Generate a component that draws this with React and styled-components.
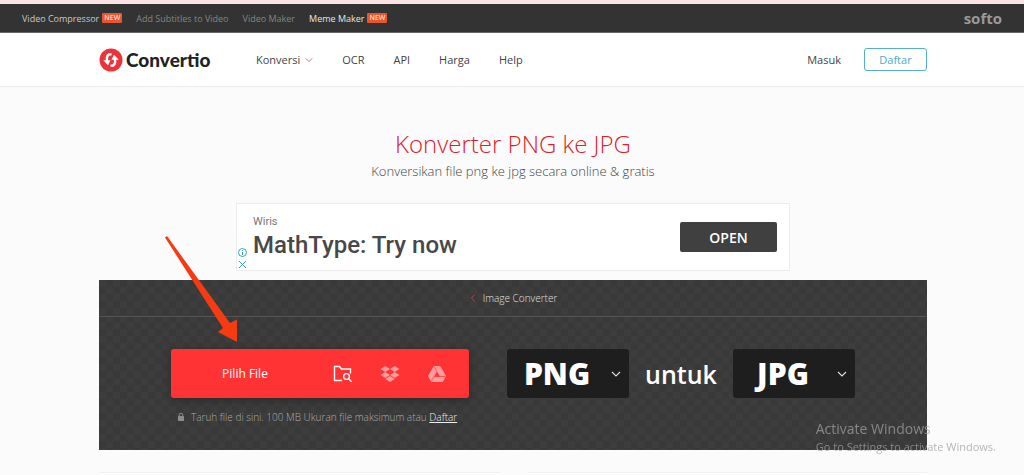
import React from 'react'
import styled, { createGlobalStyle } from 'styled-components'

const GlobalStyle = createGlobalStyle`
    * {
        box-sizing: border-box;
    }

    body {
        margin: 0;
        background: #fbfbfb;
        color: #444;
        font-family: "Open Sans", "Noto Sans", sans-serif;
        font-size: 11px;
    }

    a {
        color: inherit;
        text-decoration: none;
    }

    button,
    select {
        font-family: inherit;
        border: 0;
        padding: 0;
        cursor: pointer;
    }
`

/* icons */
const Chevron = ({ size = 10, color = '#e0e0e0', left }) => (
    <svg width={size} height={size} viewBox="0 0 10 10" fill="none" stroke={color} strokeWidth="1.1" aria-hidden="true">
        <path d={left ? 'M7 1L3 5l4 4' : 'M1 3l4 4 4-4'} />
    </svg>
)

const LogoMark = () => (
    <svg width="24" height="24" viewBox="0 0 24 24" aria-hidden="true">
        <circle cx="12" cy="12" r="11.5" fill="#e8343a" />
        <g fill="none" stroke="#fff" strokeWidth="2.4">
            <path d="M12.500 6.400H10C8 7.400 7.600 9 7.900 11.500v2" />
            <path d="M11.500 17.600H14c2-1 2.400-2.600 2.100-5.100v-2" />
        </g>
        <path fill="#fff" d="M4.300 12.200h7.200l-2.500 5zM19.700 11.800h-7.200l2.500-5z" />
    </svg>
)

const FolderSearch = () => (
    <svg width="20" height="18" viewBox="0 0 20 18" fill="none" stroke="#fff" strokeWidth="1.4" aria-hidden="true">
        <path d="M9 15.500H1.500V1.500h5l2 2.500h9v4.500" />
        <circle cx="13.500" cy="11.500" r="2.900" />
        <path d="M15.600 13.700l3 3" />
    </svg>
)

const Dropbox = () => (
    <svg width="20" height="18" viewBox="0 0 20 18" fill="#ff9d9d" aria-hidden="true">
        <path d="M5.300 1L10 4 5.300 7 .6 4zM14.700 1l4.700 3-4.700 3L10 4zM5.300 7l4.700 3-4.700 3L.6 10zM14.700 7l4.700 3-4.700 3L10 10zM5.300 14L10 11l4.700 3L10 17z" />
    </svg>
)

const Drive = () => (
    <svg width="18" height="16" viewBox="0 0 18 16" aria-hidden="true">
        <path
            d="M6 .5h6L17.500 10l-3 5.500h-11L.5 10z"
            fill="#ff9d9d"
            stroke="#ff9d9d"
            strokeLinejoin="round"
        />
        <path d="M9 5.600l2.900 4.900H6.100z" fill="#ff3333" />
        <path d="M6.100 10.500h11M9 5.600L6.100.8M6.100 10.500l-3 5" stroke="#ff3333" strokeWidth=".7" />
    </svg>
)

const Lock = () => (
    <svg width="8" height="10" viewBox="0 0 8 10" aria-hidden="true">
        <rect x="1" y="4" width="6" height="5" rx=".5" fill="#8b8b8b" />
        <path d="M2.200 4.500V3a1.800 1.800 0 0 1 3.600 0v1.500" fill="none" stroke="#8b8b8b" />
    </svg>
)

const promoLinks = [
    { label: 'Video Compressor', tone: '#c9c9c9', isNew: true },
    { label: 'Add Subtitles to Video', tone: '#858585' },
    { label: 'Video Maker', tone: '#858585' },
    { label: 'Meme Maker', tone: '#e6e6e6', isNew: true }
]

const FormatPicker = ({ label, value, options }) => (
    <PickerBox>
        <PickerSelect aria-label={label} defaultValue={value}>
            {options.map(option => (
                <option key={option}>{option}</option>
            ))}
        </PickerSelect>
        <PickerArrow>
            <Chevron />
        </PickerArrow>
    </PickerBox>
)

const App = () => (
    <>
        <GlobalStyle />
        <TopBar>
            <PromoNav>
                {promoLinks.map(link => (
                    <PromoLink key={link.label} href="#" $tone={link.tone}>
                        {link.label}
                        {link.isNew && <NewTag>NEW</NewTag>}
                    </PromoLink>
                ))}
            </PromoNav>
            <Softo href="#">softo</Softo>
        </TopBar>

        <Header>
            <HeaderInner>
                <Brand href="#">
                    <LogoMark />
                    Convertio
                </Brand>
                <Menu>
                    <a href="#">
                        Konversi <Chevron size={8} color="#c96060" />
                    </a>
                    <a href="#">OCR</a>
                    <a href="#">API</a>
                    <a href="#">Harga</a>
                    <a href="#">Help</a>
                </Menu>
                <Account>
                    <a href="#">Masuk</a>
                    <SignUp>Daftar</SignUp>
                </Account>
            </HeaderInner>
        </Header>

        <Main>
            <Title>Konverter PNG ke JPG</Title>
            <Subtitle>Konversikan file png ke jpg secara online &amp; gratis</Subtitle>

            <Ad>
                <AdMarks>
                    <svg width="9" height="9" viewBox="0 0 9 9" fill="none" stroke="#2fa5b8" aria-hidden="true">
                        <circle cx="4.500" cy="4.500" r="4" />
                        <path d="M4.500 2v1M4.500 4v3" />
                    </svg>
                    <svg width="9" height="9" viewBox="0 0 9 9" stroke="#2fa5b8" aria-hidden="true">
                        <path d="M1 1l7 7M8 1l-7 7" />
                    </svg>
                </AdMarks>
                <AdText>
                    <AdSponsor>Wiris</AdSponsor>
                    <AdHeadline>MathType: Try now</AdHeadline>
                </AdText>
                <AdButton>OPEN</AdButton>
            </Ad>

            <Panel>
                <Crumb>
                    <Chevron left size={8} color="#e04545" />
                    <a href="#">Image Converter</a>
                </Crumb>
                <PanelBody>
                    <UploadColumn>
                        <UploadBar>
                            <PickFile>Pilih File</PickFile>
                            <SourceButton aria-label="Folder"><FolderSearch /></SourceButton>
                            <SourceButton aria-label="Dropbox"><Dropbox /></SourceButton>
                            <SourceButton aria-label="Google Drive"><Drive /></SourceButton>
                        </UploadBar>
                        <Note>
                            <Lock />
                            <span>
                                Taruh file di sini. 100 MB Ukuran file maksimum atau <a href="#">Daftar</a>
                            </span>
                        </Note>
                    </UploadColumn>
                    <Formats>
                        <FormatPicker label="Format asal" value="PNG" options={['PNG', 'JPG', 'GIF']} />
                        <To>untuk</To>
                        <FormatPicker label="Format tujuan" value="JPG" options={['JPG', 'PNG', 'GIF']} />
                    </Formats>
                </PanelBody>
            </Panel>

            <Cards>
                <Card />
                <Card />
            </Cards>

            <Pointer width="76" height="110" viewBox="0 0 76 110" aria-hidden="true">
                <path d="M1 2.500L3 1l63 87 7-3.500V107L54 97l5-4z" fill="#f63a12" />
            </Pointer>
        </Main>

        <Watermark>
            <WatermarkTitle>Activate Windows</WatermarkTitle>
            <div>Go to Settings to activate Windows.</div>
        </Watermark>
    </>
)

export default App

const TopBar = styled.div`
    display: flex;
    align-items: center;
    justify-content: space-between;
    height: 33px;
    padding: 0 22px;
    background: #333;
    border-top: 4px solid #fbe3e3;
    border-bottom: 1px solid #666;
`

const PromoNav = styled.nav`
    display: flex;
    gap: 14px;
    font-size: 9px;
`

const PromoLink = styled.a`
    display: flex;
    align-items: center;
    gap: 3px;
    color: ${props => props.$tone};
`

const NewTag = styled.span`
    padding: 0 2px;
    border-radius: 1px;
    background: #e8552f;
    color: #fbd8cc;
    font-size: 7px;
    font-weight: 600;
    line-height: 10px;
`

const Softo = styled.a`
    color: #999;
    font-size: 15px;
    font-weight: 700;
    line-height: 20px;
`

const Header = styled.header`
    padding-left: 2px;
    background: #fff;
    border-bottom: 1px solid #ececec;
`

const HeaderInner = styled.div`
    display: flex;
    align-items: center;
    max-width: 828px;
    height: 53px;
    margin: 0 auto;
`

const Brand = styled.a`
    display: flex;
    align-items: center;
    gap: 3px;
    width: 157px;
    color: #222;
    font-family: Lato, sans-serif;
    font-size: 19px;
    font-weight: 900;
`

const Menu = styled.nav`
    display: flex;
    flex: 1;
    gap: 29px;

    svg {
        margin-left: 2px;
    }
`

const Account = styled.div`
    display: flex;
    align-items: center;
    gap: 23px;
`

const SignUp = styled.button`
    width: 63px;
    height: 23px;
    border: 1px solid #55b0cf;
    border-radius: 3px;
    background: #fff;
    color: #4fa8cc;
    font-size: 11px;
`

const Main = styled.main`
    position: relative;
    display: flex;
    flex-direction: column;
    align-items: center;
    padding: 40px 0 0 2px;
`

const Title = styled.h1`
    margin: 0;
    color: #dc2228;
    font-size: 24px;
    font-weight: 300;
    line-height: 34px;
`

const Subtitle = styled.p`
    margin: 0 0 22px;
    color: #444;
    font-size: 13px;
    font-weight: 300;
    line-height: 20px;
`

const Ad = styled.section`
    display: flex;
    align-items: center;
    width: 100%;
    max-width: 554px;
    height: 68px;
    padding-right: 12px;
    border: 1px solid #ececec;
    background: #fff;
`

const AdMarks = styled.div`
    display: flex;
    flex-direction: column;
    align-self: flex-end;
    gap: 3px;
    width: 16px;
    padding: 0 0 1px 1px;
`

const AdText = styled.div`
    flex: 1;
    color: #484848;
    font-family: Roboto, sans-serif;
`

const AdSponsor = styled.div`
    color: #777;
    font-size: 11px;
    line-height: 16px;
`

const AdHeadline = styled.div`
    font-size: 24px;
    font-weight: 500;
    line-height: 30px;
`

const AdButton = styled.button`
    width: 97px;
    height: 30px;
    border-radius: 2px;
    background: #404040;
    color: #fff;
    font-size: 14px;
    font-weight: 600;
`

const Panel = styled.section`
    width: 100%;
    max-width: 828px;
    margin-top: 9px;
    background: repeating-conic-gradient(#393939 0 25%, #3d3d3d 0 50%) 0 0 / 14px 14px;
`

const Crumb = styled.div`
    display: flex;
    align-items: center;
    justify-content: center;
    gap: 6px;
    height: 37px;
    border-bottom: 1px solid #555;
    color: #e0e0e0;
    font-size: 10px;
    font-weight: 300;
`

const PanelBody = styled.div`
    display: flex;
    justify-content: space-between;
    padding: 32px 72px 25px;
`

const UploadColumn = styled.div`
    flex: 0 1 298px;
`

const UploadBar = styled.div`
    display: flex;
    align-items: center;
    height: 49px;
    padding-right: 9px;
    border-radius: 3px;
    background: #f33;
    box-shadow: 0 2px 8px #2a2a2a;
`

const PickFile = styled.button`
    flex: 1;
    height: 100%;
    background: none;
    color: #fff;
    font-size: 12px;
`

const SourceButton = styled.button`
    display: flex;
    align-items: center;
    justify-content: center;
    width: 47px;
    height: 100%;
    background: none;
`

const Note = styled.div`
    display: flex;
    align-items: center;
    gap: 6px;
    padding: 11px 0 0 6px;
    color: #aaa;
    font-size: 10px;
    font-weight: 300;
    line-height: 16px;
    white-space: nowrap;

    a {
        color: #eee;
        text-decoration: underline;
    }
`

const Formats = styled.div`
    display: flex;
    align-items: center;
    justify-content: space-between;
    width: 348px;
    height: 49px;
`

const PickerBox = styled.div`
    position: relative;
    width: 122px;
    height: 49px;
`

const PickerSelect = styled.select`
    width: 100%;
    height: 100%;
    padding-right: 22px;
    appearance: none;
    border-radius: 3px;
    background: #1e1e1e;
    color: #fff;
    font-size: 30px;
    font-weight: 800;
    text-align-last: center;
`

const PickerArrow = styled.span`
    position: absolute;
    top: 0;
    right: 8px;
    display: flex;
    align-items: center;
    height: 100%;
    pointer-events: none;
`

const To = styled.span`
    color: #fff;
    font-size: 25px;
    font-weight: 600;
`

const Cards = styled.div`
    display: grid;
    grid-template-columns: 1fr 1fr;
    gap: 28px;
    width: 100%;
    max-width: 828px;
    margin-top: 22px;
`

const Card = styled.div`
    height: 2px;
    border-top: 1px solid #f0f0f0;
    background: #fff;
`

/* red arrow lying over the page, aimed at the upload button */
const Pointer = styled.svg`
    position: absolute;
    top: 148px;
    left: calc(50% - 348px);
    pointer-events: none;
`

const Watermark = styled.div`
    position: fixed;
    right: 28px;
    bottom: 20px;
    color: rgba(160, 160, 160, 0.75);
    font-size: 11px;
    line-height: 16px;
    pointer-events: none;
`

const WatermarkTitle = styled.div`
    font-size: 14px;
    line-height: 20px;
`
